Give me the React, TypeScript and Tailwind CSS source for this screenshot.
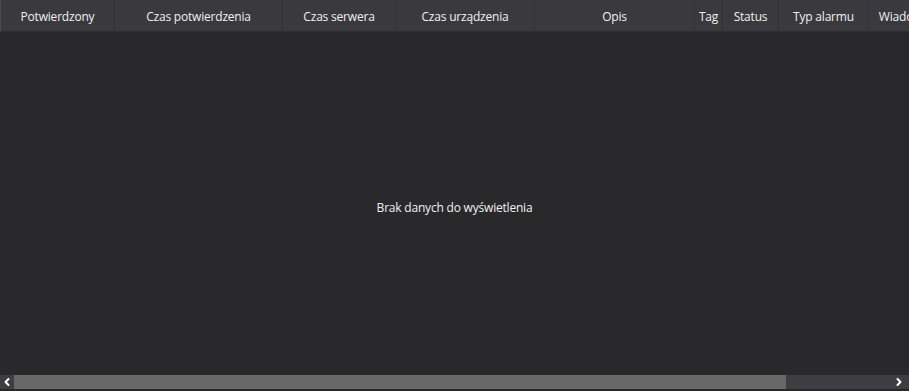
import { ChevronLeft, ChevronRight } from 'lucide-react';

const columns = [
  { label: 'Potwierdzony', width: 'w-[114px]' },
  { label: 'Czas potwierdzenia', width: 'w-[168px]' },
  { label: 'Czas serwera', width: 'w-[113px]' },
  { label: 'Czas urządzenia', width: 'w-[139px]' },
  { label: 'Opis', width: 'w-[160px]' },
  { label: 'Tag', width: 'w-[28px]' },
  { label: 'Status', width: 'w-[56px]' },
  { label: 'Typ alarmu', width: 'w-[90px]' },
  { label: 'Wiadomość', width: 'w-[84px]' },
];

export default function App() {
  return (
    <div className="w-[909px] h-[391px] flex flex-col bg-[#29292b] text-[12px] tracking-[-0.2px] text-[#f0f0f0] font-['Open_Sans','Noto_Sans',sans-serif] overflow-hidden">
      <div className="flex h-[32px] shrink-0 bg-[#3a3a3e] border-b border-b-[#2f2f33] border-l border-l-[#4a4a4e] overflow-hidden">
        {columns.map((col) => (
          <div
            key={col.label}
            className={`${col.width} shrink-0 flex items-center justify-center pt-[3px] border-r border-r-[#333337] whitespace-nowrap overflow-hidden`}
          >
            {col.label}
          </div>
        ))}
      </div>
      <div className="flex-1 flex items-center justify-center pt-[8px]">Brak danych do wyświetlenia</div>
      <div className="h-[14px] shrink-0 flex items-stretch bg-[#3e3e42] mb-[2px]">
        <div className="w-[14px] flex items-center justify-center text-white">
          <ChevronLeft size={12} strokeWidth={4} />
        </div>
        <div className="w-[772px] bg-[#686868]" />
        <div className="flex-1" />
        <div className="w-[14px] mr-[3px] flex items-center justify-center text-white">
          <ChevronRight size={12} strokeWidth={4} />
        </div>
      </div>
    </div>
  );
}
